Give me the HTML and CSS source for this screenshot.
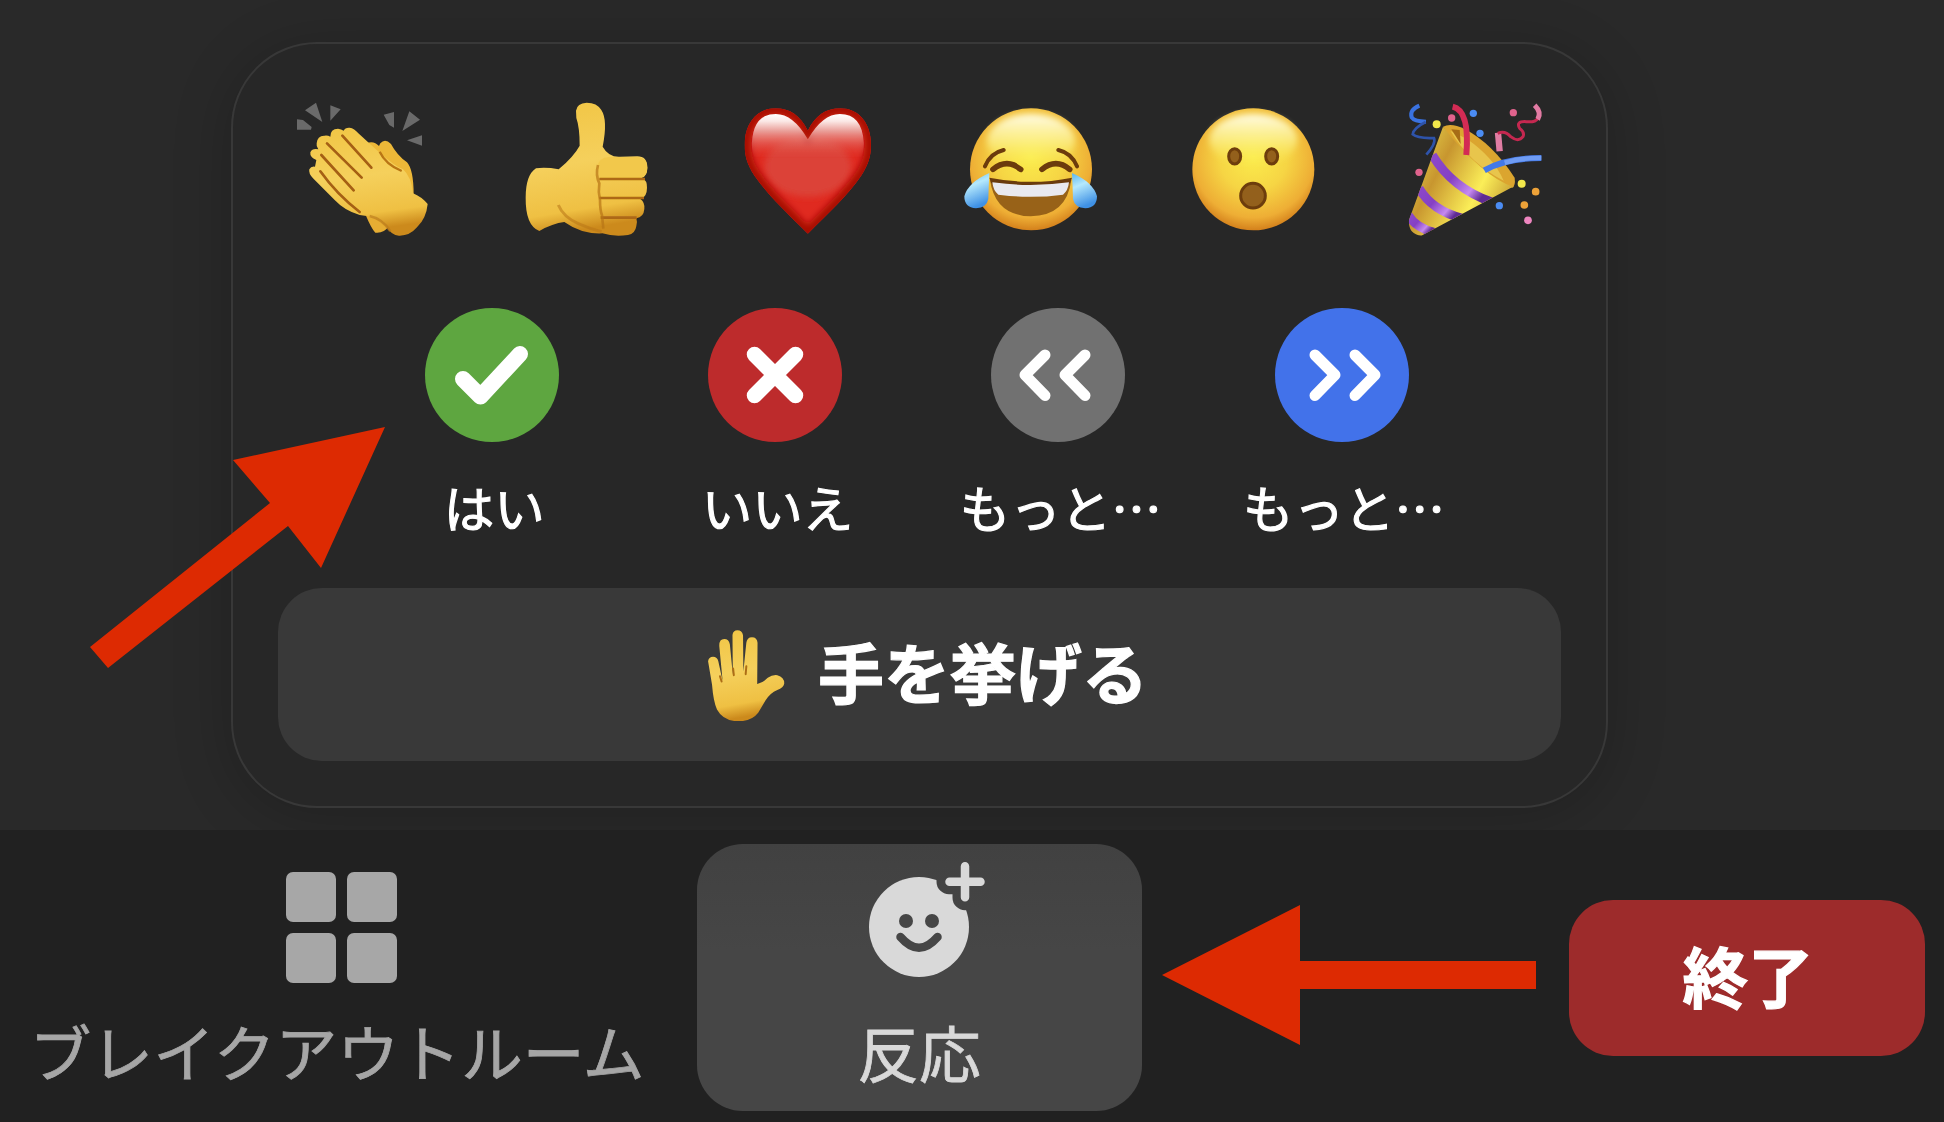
FILE: index.html
```html
<!DOCTYPE html>
<html lang="ja">
<head>
<meta charset="utf-8">
<title>反応</title>
<link rel="stylesheet" href="styles.css">
</head>
<body>
<div class="app">
  <main class="stage">
    <section class="panel">
      <div class="emojis">
        <svg class="emoji" viewBox="7 0 540 540">
          <defs>
            <linearGradient id="skin" x1="0" y1="0" x2="0.15" y2="1"><stop offset="0" stop-color="#f1c544"/><stop offset=".5" stop-color="#f5d05c"/><stop offset=".85" stop-color="#efc043"/><stop offset="1" stop-color="#cc8a1c"/></linearGradient>
            <filter id="soft" x="-20%" y="-20%" width="140%" height="140%"><feGaussianBlur stdDeviation="2.2"/></filter>
            <filter id="softer" x="-30%" y="-30%" width="160%" height="160%"><feGaussianBlur stdDeviation="9"/></filter>
          </defs>
          <g fill="#6a6a6a">
            <path d="M106 91l33-23 19 58zM182 76l31 12-31 34zM82 118l18 2 26 21-2 8H82zM342 104l31-8v47l-14-8zM419 94l32 25-53 34zM412 181l45-15v31z"/>
          </g>
          <path d="M288 405q19 4 42 4l28 30q-16 22-41 19-12-12-29-53z" fill="#e6ad33"/>
          <path d="M290 190q22-10 38 8l4-8q14-16 32 2 18 34 48 55 20 22 20 98l-60 10-80-100z" fill="#edb838"/>
          <path d="M141 190Q143 166 165 167 175 166 182 170 182 146 205 146 215 147 222 152 226 142 240 143 254 145 266 160L330 218Q375 258 400 268 425 290 430 340 455 350 474 372 470 415 442 442 420 468 388 467 365 465 350 440 325 410 270 405 225 392 195 360L130 295Q116 280 119 268 124 258 136 260L140 240Q120 232 122 217 128 204 146 208 139 200 141 190z" fill="url(#skin)"/>
          <path d="M330 215q18 38 66 58" fill="none" stroke="#b97512" stroke-width="7" filter="url(#soft)"/>
          <path d="M218 167l87 96M172 190l104 103M155 225l97 106M152 274q50 70 118 122" fill="none" stroke="#a55f12" stroke-width="8" stroke-linecap="round" filter="url(#soft)"/>
          <path d="M300 408q38 8 62 46" fill="none" stroke="#b8781a" stroke-width="8" opacity=".6" filter="url(#soft)"/>
        </svg>
        <svg class="emoji" viewBox="-15 0 540 540">
          <path d="M228 92q3-23 32-24 31 0 44 22 20 30 4 110 18 32 52 30l52-1q30 0 30 34 0 25-16 30 16 8 15 30 0 29-20 34 14 10 12 30-2 25-24 28 4 12 0 23-3 23-25 27-42 6-77-5-62 3-114-34-35 4-75 27-42-17-41-100 0-68 31-88 30-4 68 3 46-39 63-71 0-55-10-83z" fill="url(#skin)"/>
          <path d="M292 262q3-30 36-31h84q30 2 30 32 0 29-27 31H303q-10-10-11-32z" fill="#f2c84b"/>
          <path d="M298 297h137M298 354h134M302 413h108" stroke="#ad6817" stroke-width="8" filter="url(#soft)" fill="none"/>
          <path d="M294 255q-8 30 4 55-4 25 2 50 0 30 6 46l4 40" stroke="#b87515" stroke-width="8" fill="none" opacity=".7" filter="url(#soft)"/>
          <path d="M175 375q15 36 60 56 35 16 70 24" stroke="#b97618" stroke-width="9" fill="none" opacity=".55" filter="url(#soft)"/>
        </svg>
        <svg class="emoji" viewBox="-7.5 0 540 540">
          <defs>
            <clipPath id="heartClip"><path d="M265 461C200 396 145 345 105 287 78 246 74 217 76 181 81 121 119 85 167 85c45 0 75 22 98 67 23-45 53-67 98-67 48 0 86 36 91 96 2 36-2 65-29 106-40 58-95 109-160 174z"/></clipPath>
            <linearGradient id="shine" x1="0" y1="0" x2="0" y2="1"><stop offset="0" stop-color="#fff"/><stop offset=".16" stop-color="#fbe9e6"/><stop offset=".38" stop-color="#eaa09a"/><stop offset="1" stop-color="#e24439" stop-opacity="0"/></linearGradient>
          </defs>
          <g clip-path="url(#heartClip)">
            <rect x="60" y="70" width="410" height="400" fill="#e02a20"/>
            <ellipse cx="265" cy="260" rx="130" ry="90" fill="#dc4338" filter="url(#softer)"/>
            <path d="M265 461C200 396 145 345 105 287 78 246 74 217 76 181 81 121 119 85 167 85c45 0 75 22 98 67 23-45 53-67 98-67 48 0 86 36 91 96 2 36-2 65-29 106-40 58-95 109-160 174z" fill="none" stroke="#a80d05" stroke-width="38" filter="url(#softer)"/>
            <path d="M97 190q4-88 72-88 52 0 96 76 44-76 96-76 68 0 72 88 0 30-10 45H107q-10-15-10-45z" fill="url(#shine)" filter="url(#soft)"/>
          </g>
        </svg>
        <svg class="emoji" viewBox="0 0 540 540">
          <defs>
            <radialGradient id="face" cx=".5" cy=".4" r=".62"><stop offset="0" stop-color="#fbec4c"/><stop offset=".45" stop-color="#f6d544"/><stop offset=".8" stop-color="#eeae35"/><stop offset="1" stop-color="#cf7817"/></radialGradient>
            <linearGradient id="gloss" x1="0" y1="0" x2="0" y2="1"><stop offset="0" stop-color="#fffbe8"/><stop offset=".5" stop-color="#fdf598" stop-opacity=".7"/><stop offset="1" stop-color="#fbf050" stop-opacity="0"/></linearGradient>
            <linearGradient id="tear" x1="0" y1="0" x2=".3" y2="1"><stop offset="0" stop-color="#58b4ee"/><stop offset=".4" stop-color="#b5e9fd"/><stop offset="1" stop-color="#3f91e5"/></linearGradient>
          </defs>
          <circle cx="273" cy="268" r="183" fill="url(#face)"/>
          <ellipse cx="273" cy="184" rx="132" ry="82" fill="url(#gloss)" filter="url(#softer)"/>
          <g fill="none" stroke="#6c3a08" stroke-linecap="round" filter="url(#soft)">
            <path d="M135 259q16-40 56-49M411 259q-16-40-56-49" stroke-width="12"/>
            <path d="M159 268q42-34 83 0M306 268q42-34 83 0" stroke-width="17"/>
          </g>
          <path d="M150 300q121 22 244 0-14 107-122 109-106-2-122-109z" fill="#986218"/>
          <path d="M148 293q124 25 248 0l-6 17q-118 14-236 0z" fill="#6b3b0d" filter="url(#soft)"/>
          <path d="M157 307q115 16 230 0-3 26-18 37-97 13-194 0-15-11-18-37z" fill="#e9e9ef"/>
          <path d="M148 279q-64 28-75 70 0 34 35 36 32-2 37-28 1-35 3-78z" fill="url(#tear)"/>
          <path d="M396 279q64 28 75 70 0 34-35 36-32-2-37-28-1-35-3-78z" fill="url(#tear)"/>
        </svg>
        <svg class="emoji" viewBox="-22 0 540 540">
          <circle cx="249" cy="268" r="183" fill="url(#face)"/>
          <ellipse cx="249" cy="180" rx="132" ry="78" fill="url(#gloss)" filter="url(#softer)"/>
          <g fill="#93601a" stroke="#6d3d0a" stroke-width="9" filter="url(#soft)">
            <ellipse cx="193" cy="229" rx="18" ry="23"/><ellipse cx="304" cy="229" rx="18" ry="23"/>
            <circle cx="248" cy="347" r="37"/>
          </g>
        </svg>
        <svg class="emoji" viewBox="16 0 540 540">
          <defs>
            <linearGradient id="cone" x1="0" y1="0" x2="1" y2=".55"><stop offset="0" stop-color="#c6982c"/><stop offset=".25" stop-color="#d7b63e"/><stop offset=".4" stop-color="#c8962f"/><stop offset=".75" stop-color="#fbee58"/><stop offset="1" stop-color="#c9a135"/></linearGradient>
            <linearGradient id="band" x1="0" y1="0" x2="1" y2=".6"><stop offset="0" stop-color="#8c48c9"/><stop offset=".45" stop-color="#8540c4"/><stop offset=".8" stop-color="#c68af0"/><stop offset="1" stop-color="#5f2a94"/></linearGradient>
            <clipPath id="coneClip"><path d="M190 140L88 420q-3 42 37 47L400 320q-90-30-210-180z"/></clipPath>
          </defs>
          <path d="M190 140q25-12 65 7 83 43 150 146 3 25-7 30-120-30-208-183z" fill="#dba52f"/>
          <path d="M212 152q60 100 160 150-30-70-110-125z" fill="#e8c54c"/>
          <path d="M215 148l28 44-3-42z" fill="#a66c14" filter="url(#soft)"/>
          <g clip-path="url(#coneClip)">
            <rect x="80" y="130" width="330" height="345" fill="url(#cone)"/>
            <g fill="none" stroke="url(#band)" stroke-width="27">
              <path d="M158 225q60 100 180 142"/><path d="M118 325q40 67 130 90"/><path d="M85 404q22 38 80 54"/>
            </g>
          </g>
          <g fill="none">
            <path d="M219 80q52 12 41 145" stroke="#d32b54" stroke-width="18"/>
            <path d="M314 271q65-37 171-37" stroke="#4379e8" stroke-width="18"/>
            <path d="M375 248q50-15 110-14" stroke="#6f9cf4" stroke-width="14"/>
            <path d="M119 77q-30 13-23 35 8 12 43 13" stroke="#3a72e0" stroke-width="12"/>
            <path d="M138 126q-36 18-39 37 15 13 64 11 7 16-23 50" stroke="#2e53aa" stroke-width="8"/>
            <path d="M360 214l-5-56" stroke="#e07da3" stroke-width="19"/>
            <path d="M354 160q22-10 39 10 23 18 37 0 6-13-10-25-13-22 20-20 26 3 35-10" stroke="#c52850" stroke-width="9"/>
            <path d="M465 76q22 22 9 42" stroke="#e27ba3" stroke-width="15"/>
          </g>
          <g filter="url(#soft)">
            <g fill="#f2e84b"><circle cx="171" cy="133" r="12"/><circle cx="426" cy="311" r="12"/></g>
            <g fill="#4b8cf3"><circle cx="281" cy="100" r="11"/><circle cx="301" cy="160" r="11"/><circle cx="359" cy="377" r="11"/></g>
            <g fill="#e0648d"><circle cx="216" cy="114" r="11"/><circle cx="401" cy="98" r="11"/><circle cx="118" cy="277" r="11"/></g>
            <g fill="#eda238"><circle cx="468" cy="335" r="11.500"/><circle cx="434" cy="375" r="11.500"/></g>
            <circle cx="445" cy="421" r="11.500" fill="#ee86c0"/>
          </g>
        </svg>
      </div>

      <div class="feedback">
        <div class="choice">
          <svg class="badge" viewBox="0 0 134 134"><circle cx="67" cy="67" r="67" fill="#5ea640"/><path d="M38 71l17.500 17.500 39.500-42.500" fill="none" stroke="#fff" stroke-width="16" stroke-linecap="round" stroke-linejoin="round"/></svg>
          <span class="label">はい</span>
        </div>
        <div class="choice">
          <svg class="badge" viewBox="0 0 134 134"><circle cx="67" cy="67" r="67" fill="#bd2b2c"/><path d="M46.500 46.500l41 41M87.500 46.500l-41 41" fill="none" stroke="#fff" stroke-width="15.500" stroke-linecap="round"/></svg>
          <span class="label">いいえ</span>
        </div>
        <div class="choice">
          <svg class="badge" viewBox="0 0 134 134"><circle cx="67" cy="67" r="67" fill="#717171"/><path d="M54 47L34 67l20 20.500M94 47L74 67l20 20.500" fill="none" stroke="#fff" stroke-width="11" stroke-linecap="round" stroke-linejoin="round"/></svg>
          <span class="label">もっと…</span>
        </div>
        <div class="choice">
          <svg class="badge" viewBox="0 0 134 134"><circle cx="67" cy="67" r="67" fill="#4272ea"/><path d="M40 47l20 20-20 20.500M80 47l20 20-20 20.500" fill="none" stroke="#fff" stroke-width="11" stroke-linecap="round" stroke-linejoin="round"/></svg>
          <span class="label">もっと…</span>
        </div>
      </div>

      <button class="raise">
        <svg class="hand" viewBox="84 150 234 276">
          <path d="M86 245q2-14 15-14 13 0 16 14l13 59-10-105q-1-22 15-22 14 0 17 16l9 92-1-120q2-14 15-14 14 0 17 15l1 110 9-87q2-17 17-17 16 0 17 17l-1 125q18-4 32-19 14-10 29-8 21 5 21 25-2 12-21 20-22 9-36 32l-22 37q-20 26-62 26-45-2-63-36-11-24-15-75z" fill="url(#skin)"/>
          <path d="M127 306l-5-16M164 287l-2-20M200 284l2-24" stroke="#ad6d15" stroke-width="6" fill="none" stroke-linecap="round" filter="url(#soft)"/>
        </svg>
        <span class="raise-text">手を挙げる</span>
      </button>
    </section>
  </main>

  <footer class="toolbar">
    <button class="tool">
      <span class="rooms"><i></i><i></i><i></i><i></i></span>
      <span class="caption">ブレイクアウトルーム</span>
    </button>
    <button class="tool active">
      <svg class="smiley" viewBox="0 0 118 118">
        <defs><mask id="bite"><rect width="118" height="118" fill="#fff"/><path d="M80 22.700h32M96 6.700v32" stroke="#000" stroke-width="25" stroke-linecap="round"/></mask></defs>
        <circle cx="50" cy="68" r="50" fill="#d9d9d9" mask="url(#bite)"/>
        <path d="M80.500 22.700h31M96 7.200v31" stroke="#d9d9d9" stroke-width="8.500" stroke-linecap="round"/>
        <circle cx="37" cy="62" r="7" fill="#464646"/><circle cx="63" cy="62" r="7" fill="#464646"/>
        <path d="M31.500 78q18.500 21.500 37 0" fill="none" stroke="#464646" stroke-width="8.500" stroke-linecap="round"/>
      </svg>
      <span class="caption">反応</span>
    </button>
    <button class="end"><span class="end-text">終了</span></button>
  </footer>

  <svg class="arrows" viewBox="0 0 1944 1122">
    <path d="M385 427L233 460l37 43-180 144 18 21 180-142 33 42z"/>
    <path d="M1162 975l138-70v56h236v28h-236v56z"/>
  </svg>
</div>
</body>
</html>
```
FILE: styles.css
```css
* { box-sizing: border-box; }

body {
  margin: 0;
  background: #292929;
  font-family: "Noto Sans CJK JP", sans-serif;
}

button {
  border: 0;
  padding: 0;
  color: inherit;
  font: inherit;
}

svg { display: block; }

.app {
  position: relative;
  display: flex;
  flex-direction: column;
  width: 1944px;
  height: 1122px;
  overflow: hidden;
  background: #292929;
}

.stage {
  height: 830px;
  padding: 42px 0 0 231px;
}

.panel {
  display: flex;
  flex-direction: column;
  width: 1377px;
  height: 766px;
  padding: 36px 0 0;
  border: 2px solid #383838;
  border-radius: 86px;
  background: #272727;
  box-shadow: 0 8px 60px rgba(0, 0, 0, .2);
}

.emojis {
  display: grid;
  grid-template-columns: repeat(6, 222.6px);
  justify-items: center;
  margin-left: 18px;
}

.emoji {
  width: 180px;
  height: 180px;
  filter: blur(.6px);
}

.feedback {
  display: grid;
  grid-template-columns: repeat(4, 283.3px);
  margin: 48px 0 0 117px;
}

.choice {
  display: flex;
  flex-direction: column;
  align-items: center;
  height: 280px;
}

.badge {
  width: 134px;
  height: 134px;
}

.label {
  margin-top: 27px;
  padding-left: 5px;
  color: #fff;
  font-size: 50.5px;
  line-height: 74px;
  white-space: nowrap;
  -webkit-text-stroke: 1.1px #fff;
}

.raise {
  display: flex;
  align-items: center;
  justify-content: center;
  gap: 33px;
  width: 1283px;
  height: 173px;
  margin-left: 45px;
  padding-left: 16px;
  border-radius: 44px;
  background: #393939;
  color: #fff;
  font-size: 66px;
  font-weight: 700;
  line-height: 96px;
}

.raise-text {
  padding-bottom: 9px;
  -webkit-text-stroke: 1.2px #fff;
}

.hand {
  width: 78px;
  height: 91px;
  margin-top: 2px;
  filter: blur(.6px);
}

.toolbar {
  display: flex;
  align-items: flex-start;
  height: 292px;
  padding: 14px 0 0;
  background: #212121;
  color: #a6a6a6;
}

.tool {
  display: flex;
  flex-direction: column;
  align-items: center;
  width: 683px;
  height: 267px;
  background: none;
}

.tool.active {
  width: 445px;
  margin-left: 14px;
  border-radius: 46px;
  background: linear-gradient(#414141, #464646 40%);
  color: #d8d8d8;
}

.rooms {
  display: grid;
  grid-template-columns: 50px 50px;
  gap: 11px;
  margin-top: 28px;
}

.rooms i {
  height: 50px;
  border-radius: 7px;
  background: #a7a7a7;
}

.smiley {
  width: 118px;
  height: 118px;
  margin: 15px 0 0 17px;
}

.caption {
  margin-top: 23px;
  padding-right: 9px;
  font-size: 61.8px;
  line-height: 88px;
  white-space: nowrap;
  -webkit-text-stroke: .8px currentColor;
}

.tool.active .caption {
  margin-top: 30px;
  padding-right: 1px;
}

.end {
  width: 356px;
  height: 156px;
  margin: 56px 0 0 427px;
  border-radius: 44px;
  background: #9d2b2b;
  color: #fff;
  font-size: 65.500px;
  font-weight: 700;
  line-height: 94px;
}

.end-text {
  padding-left: 2px;
  position: relative;
  top: -3px;
  -webkit-text-stroke: 1.2px #fff;
}

.arrows {
  position: absolute;
  inset: 0;
  width: 1944px;
  height: 1122px;
  fill: #dd2a02;
  pointer-events: none;
}
```
